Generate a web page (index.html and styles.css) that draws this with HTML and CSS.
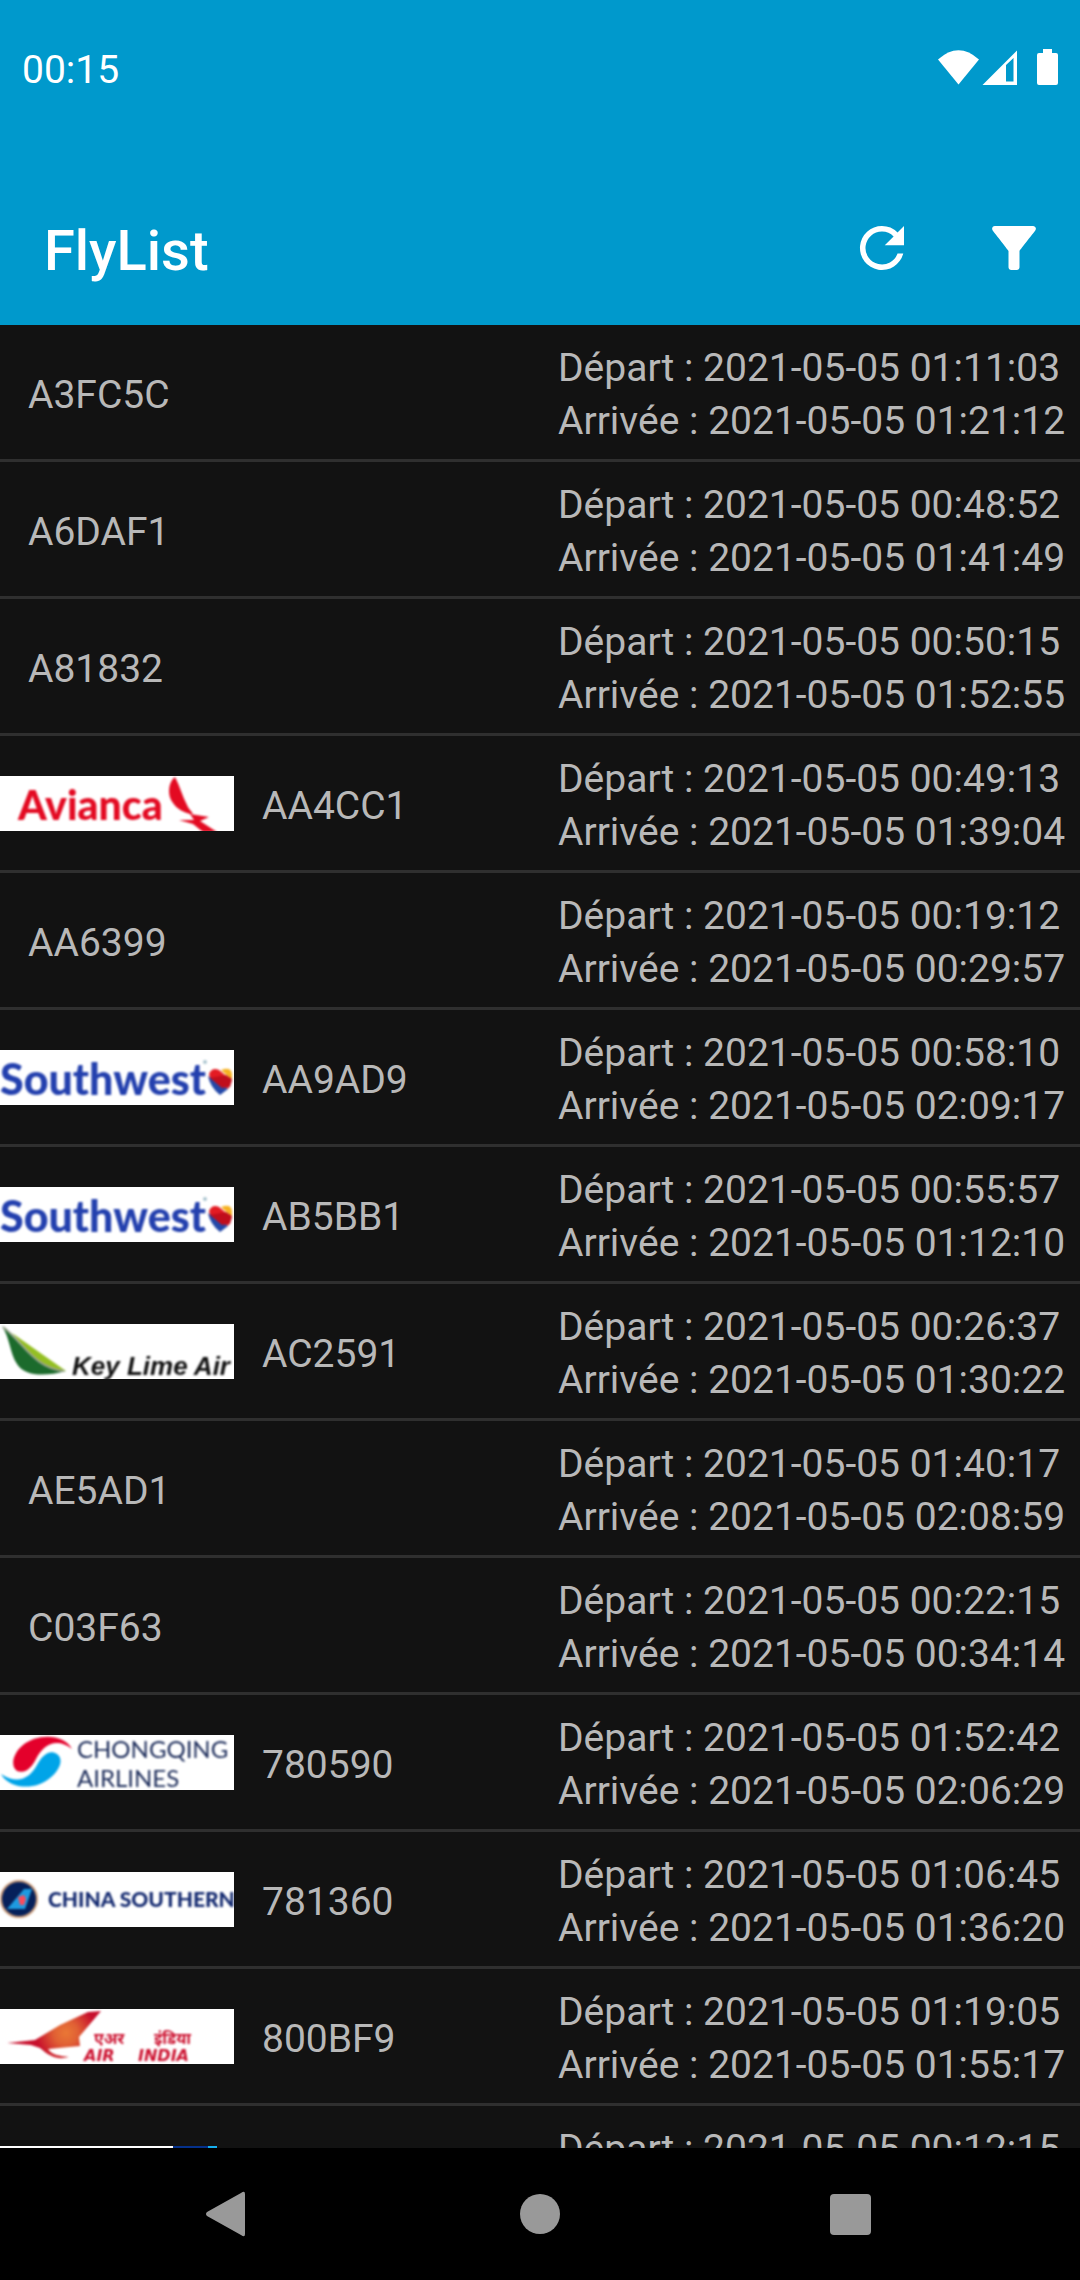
FILE: index.html
```html
<!DOCTYPE html>
<html lang="fr">
<head>
<meta charset="utf-8">
<meta name="viewport" content="width=device-width, initial-scale=1">
<title>FlyList</title>
<link rel="stylesheet" href="styles.css">
</head>
<body>
<div class="app">
  <header class="header">
    <div class="status">
      <time class="clock">00:15</time>
      <svg class="status-icons" width="120" height="36" viewBox="0 0 120 36" aria-hidden="true">
        <path d="M0 10.500Q20.500-8 41 10.500L20.500 35.500Z"/>
        <path fill-rule="evenodd" d="M44.500 36L79 1.500V36ZM68 16V32.500H75.500V9Z"/>
        <path d="M105 0h9v4h4q2 0 2 2v28q0 2-2 2h-17q-2 0-2-2V6q0-2 2-2h4Z"/>
      </svg>
    </div>
    <div class="toolbar">
      <h1 class="title">FlyList</h1>
      <button class="action" type="button" aria-label="Actualiser">
        <svg class="action-icon" viewBox="0 0 24 24"><path d="M17.650 6.350A7.958 7.958 0 0 0 12 4a8 8 0 1 0 7.730 10h-2.080A6 6 0 1 1 12 6c1.660 0 3.140.69 4.220 1.780L13 11h7V4l-2.350 2.350z"/></svg>
      </button>
      <button class="action" type="button" aria-label="Filtrer">
        <svg class="action-icon" viewBox="0 0 24 24"><path d="M4.250 5.610C6.270 8.200 10 13 10 13v6c0 .55.45 1 1 1h2c.55 0 1-.45 1-1v-6s3.720-4.800 5.740-7.390A.998.998 0 0 0 18.950 4H5.040c-.83 0-1.300.95-.79 1.610z"/></svg>
      </button>
    </div>
  </header>

  <main class="content">
    <ul class="flights">
      <li class="flight"><span class="code">A3FC5C</span><div class="times"><p>Départ : 2021-05-05 01:11:03</p><p>Arrivée : 2021-05-05 01:21:12</p></div></li>
      <li class="flight"><span class="code">A6DAF1</span><div class="times"><p>Départ : 2021-05-05 00:48:52</p><p>Arrivée : 2021-05-05 01:41:49</p></div></li>
      <li class="flight"><span class="code">A81832</span><div class="times"><p>Départ : 2021-05-05 00:50:15</p><p>Arrivée : 2021-05-05 01:52:55</p></div></li>
      <li class="flight">
        <svg class="logo" viewBox="0 0 234 55"><g class="soft" fill="#e30a22">
          <text class="avianca" x="18" y="44">Avianca</text>
          <path d="M175 1C168 6 167 20 173 27C178 34 184 36 190 38L209 41L200 45L217 56H203L193 48L179 44H194L190 38C196 38 190 36 187 29C182 20 180 10 175 1Z"/>
        </g></svg>
        <span class="code">AA4CC1</span><div class="times"><p>Départ : 2021-05-05 00:49:13</p><p>Arrivée : 2021-05-05 01:39:04</p></div></li>
      <li class="flight"><span class="code">AA6399</span><div class="times"><p>Départ : 2021-05-05 00:19:12</p><p>Arrivée : 2021-05-05 00:29:57</p></div></li>
      <li class="flight">
        <svg class="logo" viewBox="0 0 234 55"><g class="soft">
          <text class="southwest" x="0" y="45">Southwest</text>
          <circle cx="205" cy="12" r="2" fill="#a9c3cf"/>
          <path fill="#e31b23" d="M209 24Q212 17 219 20L232 31L228 39L210 28Z"/>
          <path fill="#f6b221" d="M221 20Q231 16 232 24V30Z"/>
          <path fill="#2348a8" d="M208 26L228 39L220 45Q210 37 208 26Z"/>
          <path fill="#c00e1c" d="M210 28L222 38L230 37L232 29L226 25Z"/>
        </g></svg>
        <span class="code">AA9AD9</span><div class="times"><p>Départ : 2021-05-05 00:58:10</p><p>Arrivée : 2021-05-05 02:09:17</p></div></li>
      <li class="flight">
        <svg class="logo" viewBox="0 0 234 55"><g class="soft">
          <text class="southwest" x="0" y="45">Southwest</text>
          <circle cx="205" cy="12" r="2" fill="#a9c3cf"/>
          <path fill="#e31b23" d="M209 24Q212 17 219 20L232 31L228 39L210 28Z"/>
          <path fill="#f6b221" d="M221 20Q231 16 232 24V30Z"/>
          <path fill="#2348a8" d="M208 26L228 39L220 45Q210 37 208 26Z"/>
          <path fill="#c00e1c" d="M210 28L222 38L230 37L232 29L226 25Z"/>
        </g></svg>
        <span class="code">AB5BB1</span><div class="times"><p>Départ : 2021-05-05 00:55:57</p><p>Arrivée : 2021-05-05 01:12:10</p></div></li>
      <li class="flight">
        <svg class="logo" viewBox="0 0 234 55"><g class="soft">
          <path fill="#1c6b2c" d="M2 2C10 14 10 30 17 40C24 52 44 53 66 47C40 44 28 26 2 2Z"/>
          <path fill="#94bf22" d="M12 9L66 47C44 46 32 32 12 9Z"/>
          <path fill="none" stroke="#9aa38e" stroke-width="2" d="M3 3C24 19 34 44 64 47"/>
          <text class="keylime" x="72" y="51">Key Lime Air</text>
        </g></svg>
        <span class="code">AC2591</span><div class="times"><p>Départ : 2021-05-05 00:26:37</p><p>Arrivée : 2021-05-05 01:30:22</p></div></li>
      <li class="flight"><span class="code">AE5AD1</span><div class="times"><p>Départ : 2021-05-05 01:40:17</p><p>Arrivée : 2021-05-05 02:08:59</p></div></li>
      <li class="flight"><span class="code">C03F63</span><div class="times"><p>Départ : 2021-05-05 00:22:15</p><p>Arrivée : 2021-05-05 00:34:14</p></div></li>
      <li class="flight">
        <svg class="logo" viewBox="0 0 234 55"><g class="soft">
          <path fill="#e4002b" d="M72 14C64 -1 38 -2 23 10C13 18 10 31 17 36C26 39 32 32 36 24C42 11 56 1 72 14Z"/>
          <path fill="#00a4e8" d="M1 39C9 54 35 56 50 43C60 35 64 24 57 19C49 14 42 21 37 30C30 43 18 50 1 39Z"/>
          <text class="chongqing" x="77" y="23">CHONGQING</text>
          <text class="chongqing" x="77" y="52">AIRLINES</text>
        </g></svg>
        <span class="code">780590</span><div class="times"><p>Départ : 2021-05-05 01:52:42</p><p>Arrivée : 2021-05-05 02:06:29</p></div></li>
      <li class="flight">
        <svg class="logo" viewBox="0 0 234 55"><g class="soft">
          <circle cx="19" cy="27" r="18" fill="#06205a" stroke="#c99a78" stroke-width="2"/>
          <path fill="#1e9be0" d="M7 37L24 17H32L25 37Z"/>
          <path fill="#fb4b5c" d="M18 25L24 23L26 27L24 33H20Z"/>
          <text class="southern" x="48" y="35">CHINA SOUTHERN</text>
        </g></svg>
        <span class="code">781360</span><div class="times"><p>Départ : 2021-05-05 01:06:45</p><p>Arrivée : 2021-05-05 01:36:20</p></div></li>
      <li class="flight">
        <svg class="logo" viewBox="0 0 234 55">
          <defs><radialGradient id="wing" gradientUnits="userSpaceOnUse" cx="66" cy="24" r="30"><stop offset="0" stop-color="#ea7836"/><stop offset=".4" stop-color="#e06034"/><stop offset="1" stop-color="#c70f2c"/></radialGradient></defs>
          <g class="soft">
          <path fill="url(#wing)" d="M7 34L35 31L60 16L88 3L101 2L79 28L80 37L48 40C52 46 60 47 69 48C58 51 50 48 40 39L31 36Z"/>
          <text class="air-india-hindi" y="35"><tspan x="94">एअर</tspan> <tspan x="154">इंडिया</tspan></text>
          <text class="air-india" y="52"><tspan x="84">AIR</tspan> <tspan x="138">INDIA</tspan></text>
        </g></svg>
        <span class="code">800BF9</span><div class="times"><p>Départ : 2021-05-05 01:19:05</p><p>Arrivée : 2021-05-05 01:55:17</p></div></li>
      <li class="flight">
        <svg class="logo logo-short" viewBox="0 0 217 55"><path fill="#05318c" d="M173 0H208V55H173Z"/><path fill="#16aeee" d="M208 0H217V55H208Z"/></svg>
        <div class="times"><p>Départ : 2021-05-05 00:12:15</p></div></li>
    </ul>
  </main>

  <nav class="navbar">
    <button class="nav-button" type="button" aria-label="Retour"><svg class="nav-icon" viewBox="0 0 48 48"><path d="M2 22L36 3Q40 0 40 4V44Q40 48 36 45L2 26Q0 24 2 22Z"/></svg></button>
    <button class="nav-button" type="button" aria-label="Accueil"><svg class="nav-icon" viewBox="0 0 48 48"><circle cx="24" cy="24" r="20"/></svg></button>
    <button class="nav-button" type="button" aria-label="Applications récentes"><svg class="nav-icon" viewBox="0 0 48 48"><rect x="3" y="4" width="41" height="41" rx="4"/></svg></button>
  </nav>
</div>
</body>
</html>
```
FILE: styles.css
```css
* {
  box-sizing: border-box;
}

body {
  margin: 0;
  background: #121212;
  color: #b8b8b8;
  font-family: Roboto, "Noto Sans", sans-serif;
  font-size: 39px;
}

button {
  display: flex;
  align-items: center;
  justify-content: center;
  padding: 0;
  border: 0;
  background: none;
}

.app {
  display: flex;
  flex-direction: column;
  height: 100vh;
}

.header {
  flex: none;
  background: #0099cc;
  color: #fff;
}

.status {
  display: flex;
  align-items: center;
  justify-content: space-between;
  height: 134px;
  margin-bottom: 37px;
  padding: 0 22px;
}

.clock {
  padding-top: 6px;
}

.status-icons {
  fill: #fff;
}

.toolbar {
  display: flex;
  align-items: center;
  height: 154px;
  padding-left: 44px;
}

.title {
  flex: 1;
  margin: 6px 0 0;
  font-size: 56px;
  font-weight: 500;
}

.action {
  width: 132px;
  height: 132px;
}

.action-icon {
  width: 66px;
  height: 66px;
  fill: #fff;
}

.content {
  flex: 1;
  min-height: 0;
  overflow: hidden;
}

.flights {
  margin: 0;
  padding: 0;
  list-style: none;
}

.flight {
  display: flex;
  align-items: center;
  height: 137px;
  border-bottom: 3px solid #2f2f2f;
}

.logo {
  flex: none;
  width: 234px;
  height: 55px;
  background: #fff;
}

.logo-short {
  width: 217px;
}

.soft {
  filter: blur(1px);
}

.code {
  padding: 6px 28px 0;
}

.times {
  align-self: flex-start;
  width: 522px;
  margin-left: auto;
  padding-top: 17px;
  line-height: 53px;
  white-space: nowrap;
}

.times p {
  margin: 0;
}

.avianca {
  font: 900 41px Lato, sans-serif;
}

.southwest {
  fill: #2340ae;
  font: 900 43px Lato, sans-serif;
}

.keylime {
  fill: #111;
  font: italic bold 26px "Liberation Sans", sans-serif;
}

.chongqing {
  fill: #1c2c5a;
  font: 24px Lato, sans-serif;
}

.southern {
  fill: #142a70;
  font: 900 21px Lato, sans-serif;
}

.air-india,
.air-india-hindi {
  fill: #cc1230;
  font: italic bold 16px "DejaVu Sans", "Noto Sans", sans-serif;
}

.navbar {
  display: flex;
  flex: none;
  height: 132px;
  padding: 0 74px;
  background: #000;
}

.nav-button {
  flex: 1;
}

.nav-icon {
  width: 48px;
  height: 48px;
  fill: #999;
}
```
